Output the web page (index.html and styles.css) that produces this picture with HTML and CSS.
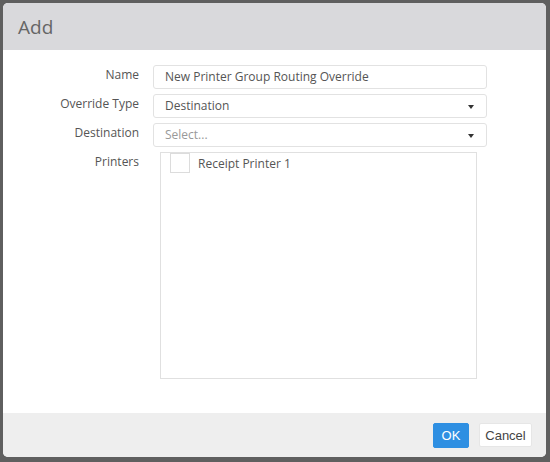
FILE: index.html
```html
<!DOCTYPE html>
<html>
<head>
<meta charset="utf-8">
<link rel="stylesheet" href="styles.css">
</head>
<body>
<div class="dialog">
  <div class="header"><span class="title">Add</span></div>
  <div class="body">
    <div class="form">
      <label class="label">Name</label>
      <div class="input">New Printer Group Routing Override</div>
      <label class="label">Override Type</label>
      <div class="input select">Destination<span class="caret"></span></div>
      <label class="label">Destination</label>
      <div class="input select placeholder">Select...<span class="caret"></span></div>
      <label class="label label-top">Printers</label>
      <div class="list">
        <div class="item"><span class="check"></span><span class="item-text">Receipt Printer 1</span></div>
      </div>
    </div>
  </div>
  <div class="footer">
    <button class="btn btn-ok">OK</button>
    <button class="btn btn-cancel">Cancel</button>
  </div>
</div>
</body>
</html>
```
FILE: styles.css
```css
html, body {
  margin: 0;
  padding: 0;
}
body {
  background: #5f5f5f;
  width: 550px;
  height: 462px;
  overflow: hidden;
  font-family: "Open Sans", "Noto Sans", sans-serif;
}
.dialog {
  margin: 3px 0 0 3px;
  width: 543px;
  height: 454px;
  border-radius: 5px;
  overflow: hidden;
  background: #fff;
  display: flex;
  flex-direction: column;
}
.header {
  height: 47px;
  flex: none;
  background: #d9d9dc;
  display: flex;
  align-items: center;
  padding-left: 15px;
}
.title {
  font-size: 19px;
  color: #666;
}
.body {
  flex: 1;
  padding-top: 15px;
}
.form {
  display: grid;
  grid-template-columns: 136px 334px;
  column-gap: 14px;
  row-gap: 5px;
}
.label {
  text-align: right;
  font-size: 12px;
  color: #555;
  line-height: 20px;
}
.label-top {
  align-self: start;
  padding-top: 0;
}
.input {
  box-sizing: border-box;
  height: 24px;
  border: 1px solid #e2e2e2;
  border-radius: 3px;
  font-size: 12px;
  color: #555;
  padding: 0 11px;
  line-height: 22px;
  position: relative;
}
.placeholder {
  color: #999;
}
.caret {
  position: absolute;
  right: 12px;
  top: 10px;
  width: 0;
  height: 0;
  border-left: 3.5px solid transparent;
  border-right: 3.5px solid transparent;
  border-top: 4px solid #333;
}
.list {
  box-sizing: border-box;
  margin-left: 7px;
  width: 317px;
  height: 227px;
  border: 1px solid #e0e0e0;
  padding: 0 9px;
}
.item {
  display: flex;
  align-items: center;
  gap: 8px;
}
.check {
  box-sizing: border-box;
  width: 20px;
  height: 20px;
  border: 1px solid #dcdcdc;
  background: #fff;
}
.item-text {
  font-size: 12px;
  color: #555;
}
.footer {
  height: 44px;
  flex: none;
  background: #eeeeee;
  display: flex;
  align-items: center;
  justify-content: flex-end;
  gap: 10px;
  padding-right: 14px;
}
.btn {
  font-family: "Liberation Sans", Arial, sans-serif;
  font-size: 13px;
  height: 25px;
  border-radius: 2px;
  padding: 0;
}
.btn-ok {
  width: 36px;
  background: #2e8fe2;
  color: #fff;
  border: 1px solid #2e8fe2;
}
.btn-cancel {
  width: 53px;
  height: 24px;
  background: #fff;
  color: #444;
  border: 1px solid #e6e6e6;
}
```
